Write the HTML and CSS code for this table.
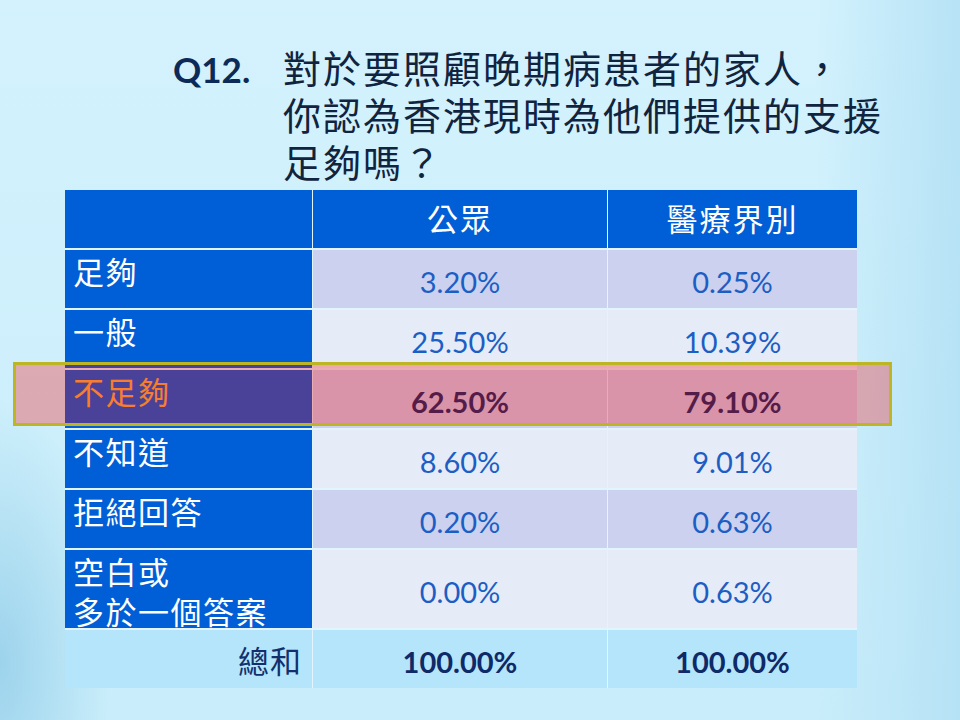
FILE: index.html
```html
<!DOCTYPE html>
<html lang="zh-Hant">
<head>
<meta charset="utf-8">
<title>Q12</title>
<link rel="stylesheet" href="styles.css">
</head>
<body>
<div class="slide">
  <div class="title">
    <div class="qnum">Q12.</div>
    <div class="qtext">對於要照顧晚期病患者的家人，<br>你認為香港現時為他們提供的支援<br>足夠嗎？</div>
  </div>
  <div class="grid">
    <div class="cell head"></div>
    <div class="cell head c">公眾</div>
    <div class="cell head c">醫療界別</div>

    <div class="cell label">足夠</div>
    <div class="cell val odd">3.20%</div>
    <div class="cell val odd">0.25%</div>

    <div class="cell label">一般</div>
    <div class="cell val even">25.50%</div>
    <div class="cell val even">10.39%</div>

    <div class="cell label hl">不足夠</div>
    <div class="cell val odd bold">62.50%</div>
    <div class="cell val odd bold">79.10%</div>

    <div class="cell label">不知道</div>
    <div class="cell val even">8.60%</div>
    <div class="cell val even">9.01%</div>

    <div class="cell label">拒絕回答</div>
    <div class="cell val odd">0.20%</div>
    <div class="cell val odd">0.63%</div>

    <div class="cell label">空白或<br>多於一個答案</div>
    <div class="cell val even">0.00%</div>
    <div class="cell val even">0.63%</div>

    <div class="cell total tl">總和</div>
    <div class="cell total val bold">100.00%</div>
    <div class="cell total val bold">100.00%</div>
  </div>
  <div class="highlight"></div>
</div>
</body>
</html>
```
FILE: styles.css
```css
html, body {
  margin: 0;
  padding: 0;
}
body {
  font-family: Lato, "Noto Sans CJK TC", sans-serif;
}
.slide {
  position: relative;
  width: 960px;
  height: 720px;
  overflow: hidden;
  background:
    radial-gradient(ellipse 110px 260px at 0% 92%, rgba(120, 190, 225, 0.55), rgba(120, 190, 225, 0) 100%),
    linear-gradient(90deg, rgba(180, 225, 245, 0) 85%, rgba(180, 225, 245, 0.9) 100%),
    linear-gradient(180deg, #d3f2fd 0%, #cdeffb 60%, #c9edfa 100%);
}
.title {
  display: flex;
  align-items: baseline;
  padding: 43px 0 0 173px;
  height: 190px;
  box-sizing: border-box;
  color: #0d2a55;
}
.qnum {
  width: 110px;
  flex: none;
  font-family: Lato, sans-serif;
  font-weight: 700;
  font-size: 35px;
  line-height: 47px;
  color: #0c2a58;
}
.qtext {
  font-family: "Noto Sans CJK TC", sans-serif;
  font-size: 38px;
  line-height: 47px;
  letter-spacing: 2px;
  color: #10243f;
  font-weight: 400;
  white-space: nowrap;
}
.grid {
  margin-left: 65px;
  width: 792px;
  display: grid;
  grid-template-columns: 247px 294px 249px;
  grid-template-rows: 58px 58px 58px 58px 58px 58px 78px 58px;
  column-gap: 1px;
  row-gap: 2px;
  background: #e2f4fd;
}
.cell {
  box-sizing: border-box;
  font-family: Lato, "Noto Sans CJK TC", sans-serif;
}
.head {
  background: #005ed6;
  color: #ffffff;
  font-family: "Noto Sans CJK TC", sans-serif;
  font-size: 31px;
  letter-spacing: 2px;
  display: flex;
  align-items: center;
  justify-content: center;
  padding-bottom: 4px;
}
.label {
  background: #005ed6;
  color: #ffffff;
  font-family: "Noto Sans CJK TC", sans-serif;
  font-size: 31px;
  line-height: 40px;
  letter-spacing: 1.5px;
  padding: 1px 0 0 8px;
}
.label.hl {
  color: #f8b040;
}
.val {
  display: flex;
  align-items: center;
  justify-content: center;
  font-size: 29px;
  color: #1c5ec4;
  padding-top: 4px;
}
.odd {
  background: #cbd1ef;
}
.even {
  background: #e6ebf8;
}
.bold {
  font-weight: 700;
  color: #0f2a68;
}
.total {
  background: #b5e5fa;
}
.tl {
  font-family: "Noto Sans CJK TC", sans-serif;
  font-size: 31px;
  letter-spacing: 1px;
  color: #12306e;
  display: flex;
  align-items: center;
  justify-content: flex-end;
  padding-right: 10px;
}
.highlight {
  position: absolute;
  left: 13px;
  top: 362px;
  width: 879px;
  height: 64px;
  box-sizing: border-box;
  border: 3px solid #bdb522;
  background: rgba(255, 0, 0, 0.29);
}
```
